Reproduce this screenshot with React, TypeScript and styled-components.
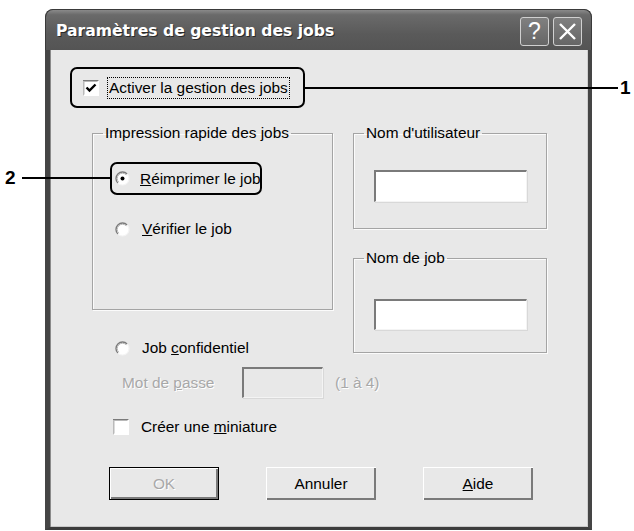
import React from "react";
import styled, { createGlobalStyle } from "styled-components";

const Global = createGlobalStyle`
  html, body { margin: 0; padding: 0; background: #ffffff; }
  body { font-family: "Liberation Sans", Arial, sans-serif; }
`;

const Page = styled.div`
  position: relative;
  width: 634px;
  height: 531px;
  overflow: hidden;
`;

const Window = styled.div`
  margin: 9px 0 0 45px;
  width: 547px;
  height: 521px;
  display: flex;
  flex-direction: column;
  border-radius: 8px 8px 0 0;
  overflow: hidden;
  background: #404040;
`;

const TitleBar = styled.div`
  height: 41px;
  flex: none;
  display: flex;
  align-items: center;
  padding: 0 9px 0 10px;
  background: linear-gradient(#8a8a8a 0%, #6a6a6a 12%, #5a5a5a 60%, #545454 100%);
  border: 1px solid #3a3a3a;
  border-bottom: none;
  border-radius: 8px 8px 0 0;
  box-sizing: border-box;
`;

const Title = styled.div`
  flex: 1;
  font-family: "DejaVu Sans", Verdana, sans-serif;
  font-weight: bold;
  font-size: 15.6px;
  color: #ffffff;
  text-shadow: 1px 1px 0 #2a2a2a;
  padding-top: 2px;
  white-space: nowrap;
`;

const Caps = styled.div`
  display: flex;
  gap: 4px;
  margin-top: 3px;
`;

const CapButton = styled.div`
  width: 29px;
  height: 29px;
  box-sizing: border-box;
  border: 1px solid #d0d0d0;
  border-radius: 3px;
  background: linear-gradient(#808080, #666666);
  display: flex;
  align-items: center;
  justify-content: center;
  color: #ffffff;
  font-family: "Liberation Sans", Arial, sans-serif;
  font-size: 23px;
  line-height: 1;
`;

const Body = styled.div`
  flex: 1;
  display: flex;
  flex-direction: column;
  background: #e8e8e8;
  border-left: 5px solid #454545;
  border-right: 4px solid #454545;
  border-bottom: 3px solid #3c3c3c;
  box-shadow: inset 1px 0 0 #8a8a8a, inset -1px 0 0 #cfcfcf, inset 0 -1px 0 #c8c8c8;
  padding: 17px 0 0 20px;
  font-size: 15.4px;
  color: #000;
`;

const Callout = styled.div<{ $w: number; $h: number }>`
  display: flex;
  align-items: center;
  gap: 10px;
  box-sizing: border-box;
  width: ${(p) => p.$w}px;
  height: ${(p) => p.$h}px;
  border: 2px solid #000;
  border-radius: 7px;
  padding-left: ${(p) => (p.$h > 36 ? 11 : 3)}px;
`;

const Focus = styled.span`
  outline: 1px dotted #000;
  outline-offset: 1px;
  white-space: nowrap;
`;

const Label = styled.span<{ $disabled?: boolean }>`
  white-space: nowrap;
  color: ${(p) => (p.$disabled ? "#a8a8a8" : "#000")};
  text-shadow: ${(p) => (p.$disabled ? "1px 1px 0 #ffffff" : "none")};
`;

const Columns = styled.div`
  display: flex;
  gap: 20px;
  margin: 16px 0 0 22px;
`;

const LeftCol = styled.div`
  display: flex;
  flex-direction: column;
  width: 241px;
`;

const RightCol = styled.div`
  display: flex;
  flex-direction: column;
  gap: 20px;
  width: 194px;
`;

const Group = styled.fieldset<{ $h: number }>`
  margin: 0;
  padding: 0;
  min-width: 0;
  box-sizing: border-box;
  height: ${(p) => p.$h}px;
  border: 1px solid #a4a4a4;
  box-shadow: 1px 1px 0 #fbfbfb, inset 1px 1px 0 #fbfbfb;
  display: flex;
  flex-direction: column;
`;

const Legend = styled.legend`
  margin-left: 10px;
  padding: 0 2px;
  line-height: 18px;
  font-size: 15.4px;
  white-space: nowrap;
`;

const OptionRow = styled.div<{ $top: number; $left: number }>`
  display: flex;
  align-items: center;
  gap: 12px;
  height: 20px;
  margin-top: ${(p) => p.$top}px;
  margin-left: ${(p) => p.$left}px;
`;

const CalloutWrap = styled.div`
  margin: 20px 0 0 17px;
`;

const Field = styled.div<{ $w: number; $h: number; $disabled?: boolean }>`
  width: ${(p) => p.$w}px;
  height: ${(p) => p.$h}px;
  box-sizing: border-box;
  background: ${(p) => (p.$disabled ? "#e8e8e8" : "#ffffff")};
  border-top: 2px solid #7a7a7a;
  border-left: 2px solid #7a7a7a;
  border-right: 1px solid #f4f4f4;
  border-bottom: 1px solid #f4f4f4;
  box-shadow: 1px 1px 0 #d8d8d8;
`;

const FieldWrap = styled.div<{ $top: number }>`
  margin: ${(p) => p.$top}px 0 0 20px;
`;

const PassRow = styled.div`
  display: flex;
  align-items: center;
  margin: 9px 0 0 52px;
`;

const PassLabel = styled(Label)`
  width: 120px;
`;

const Hint = styled(Label)`
  margin-left: 12px;
`;

const Buttons = styled.div`
  display: flex;
  gap: 47px;
  margin: 30px 0 0 39px;
`;

const Button = styled.div<{ $default?: boolean; $disabled?: boolean }>`
  width: 110px;
  height: 33px;
  box-sizing: border-box;
  display: flex;
  align-items: center;
  justify-content: center;
  font-size: 15.4px;
  color: ${(p) => (p.$disabled ? "#a8a8a8" : "#000")};
  text-shadow: ${(p) => (p.$disabled ? "1px 1px 0 #ffffff" : "none")};
  background: #e8e8e8;
  border: ${(p) => (p.$default ? "1px solid #000" : "none")};
  box-shadow: inset 1px 1px 0 #ffffff, inset -2px -2px 0 #7a7a7a, inset -1px -1px 0 #404040;
`;

const CheckBox = ({ checked }: { checked?: boolean }) => (
  <svg width="16" height="16" viewBox="0 0 16 16" style={{ flex: "none" }}>
    <rect x="0" y="0" width="16" height="16" fill="#ffffff" />
    <path d="M0 15.5V0.5H15.5" stroke="#7a7a7a" strokeWidth="1" fill="none" />
    <path d="M1 14.5V1.5H14.5" stroke="#b8b8b8" strokeWidth="1" fill="none" />
    {checked && (
      <path d="M3.5 7.5L6.5 10.5L12.5 4.5" stroke="#000" strokeWidth="2.4" fill="none" />
    )}
  </svg>
);

const Radio = ({ checked }: { checked?: boolean }) => (
  <svg width="15" height="15" viewBox="0 0 15 15" style={{ flex: "none" }}>
    <circle cx="7.5" cy="7.5" r="6.5" fill="#ffffff" />
    <path d="M2.9 12.1A6.5 6.5 0 0 1 12.1 2.9" stroke="#7a7a7a" strokeWidth="1.4" fill="none" />
    <path d="M3.8 11.2A5.2 5.2 0 0 1 11.2 3.8" stroke="#b8b8b8" strokeWidth="1" fill="none" />
    <path d="M12.1 2.9A6.5 6.5 0 0 1 2.9 12.1" stroke="#f4f4f4" strokeWidth="1.2" fill="none" />
    {checked && <circle cx="7.5" cy="7.5" r="2" fill="#000" />}
  </svg>
);

const Line = styled.div<{ $x: number; $y: number; $w: number }>`
  position: absolute;
  left: ${(p) => p.$x}px;
  top: ${(p) => p.$y}px;
  width: ${(p) => p.$w}px;
  height: 2px;
  background: #000;
`;

const Num = styled.div<{ $x: number; $y: number }>`
  position: absolute;
  left: ${(p) => p.$x}px;
  top: ${(p) => p.$y}px;
  font-family: "Liberation Sans", Arial, sans-serif;
  font-weight: bold;
  font-size: 19px;
  line-height: 20px;
  color: #000;
`;

export default function App() {
  return (
    <Page>
      <Global />
      <Window>
        <TitleBar>
          <Title>Paramètres de gestion des jobs</Title>
          <Caps>
            <CapButton>?</CapButton>
            <CapButton>
              <svg width="19" height="19" viewBox="0 0 19 19">
                <path d="M2 2L17 17M17 2L2 17" stroke="#fff" strokeWidth="2.4" />
              </svg>
            </CapButton>
          </Caps>
        </TitleBar>
        <Body>
          <Callout $w={235} $h={41}>
            <CheckBox checked />
            <Focus>
              Activer la <u>g</u>estion des jobs
            </Focus>
          </Callout>

          <Columns>
            <LeftCol>
              <Group $h={186}>
                <Legend>Impression rapide des jobs</Legend>
                <CalloutWrap>
                  <Callout $w={152} $h={33}>
                    <Radio checked />
                    <Label>
                      <u>R</u>éimprimer le job
                    </Label>
                  </Callout>
                </CalloutWrap>
                <OptionRow $top={24} $left={22}>
                  <Radio />
                  <Label>
                    <u>V</u>érifier le job
                  </Label>
                </OptionRow>
              </Group>
              <OptionRow $top={28} $left={23}>
                <Radio />
                <Label>
                  Job <u>c</u>onfidentiel
                </Label>
              </OptionRow>
            </LeftCol>
            <RightCol>
              <Group $h={105}>
                <Legend>Nom d'utilisateur</Legend>
                <FieldWrap $top={28}>
                  <Field $w={153} $h={32} />
                </FieldWrap>
              </Group>
              <Group $h={104}>
                <Legend>Nom de job</Legend>
                <FieldWrap $top={32}>
                  <Field $w={153} $h={31} />
                </FieldWrap>
              </Group>
            </RightCol>
          </Columns>

          <PassRow>
            <PassLabel $disabled>
              Mot de <u>p</u>asse
            </PassLabel>
            <Field $w={81} $h={31} $disabled />
            <Hint $disabled>(1 à 4)</Hint>
          </PassRow>

          <OptionRow $top={19} $left={43}>
            <CheckBox />
            <Label>
              Créer une <u>m</u>iniature
            </Label>
          </OptionRow>

          <Buttons>
            <Button $default $disabled>
              OK
            </Button>
            <Button>Annuler</Button>
            <Button>
              <span>
                <u>A</u>ide
              </span>
            </Button>
          </Buttons>
        </Body>
      </Window>
      <Line $x={305} $y={87} $w={313} />
      <Num $x={620} $y={78}>1</Num>
      <Line $x={22} $y={177} $w={88} />
      <Num $x={5} $y={168}>2</Num>
    </Page>
  );
}
